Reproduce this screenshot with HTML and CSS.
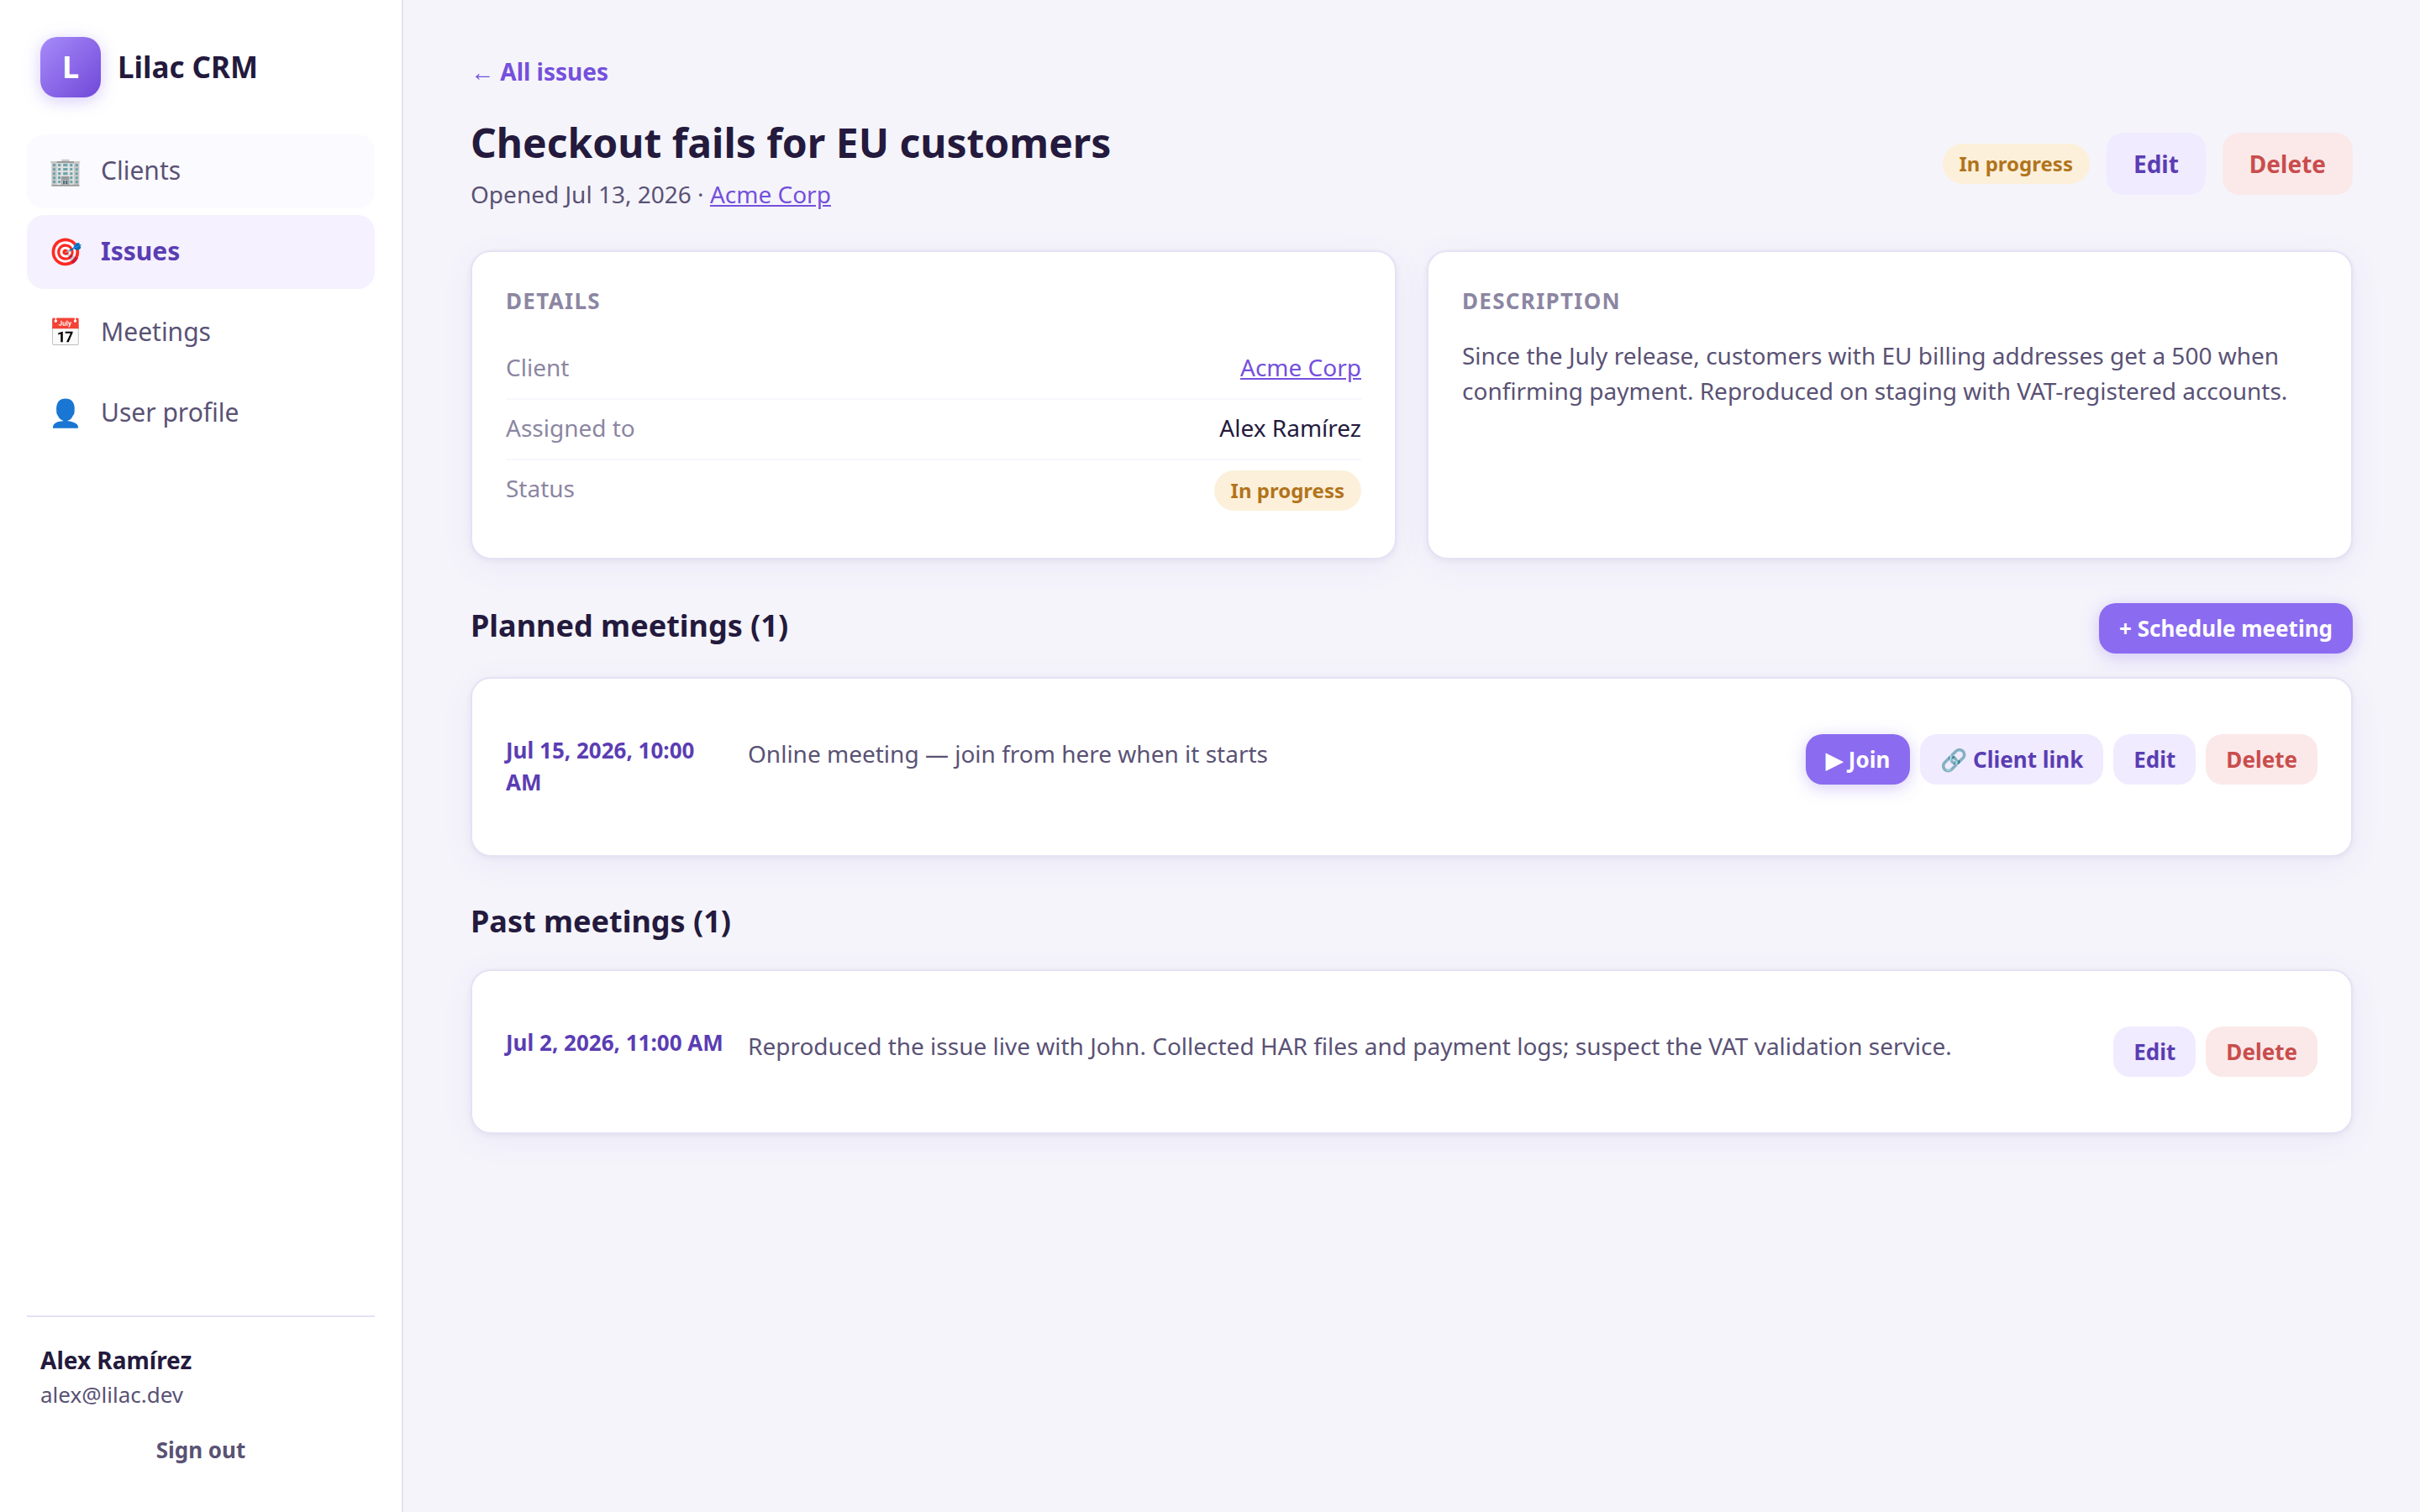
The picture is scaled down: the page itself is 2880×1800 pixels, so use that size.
FILE: index.html
```html
<!DOCTYPE html>
<html lang="en">
<head>
  <meta charset="UTF-8">
  <meta name="viewport" content="width=device-width, initial-scale=1.0">
  <title>Checkout fails for EU customers - Lilac CRM</title>
  <link rel="stylesheet" href="styles.css">
</head>
<body>
  <div class="layout">
    <!-- Sidebar -->
    <aside class="sidebar">
      <div class="brand">
        <span class="brand-logo">L</span>
        <span class="brand-name">Lilac CRM</span>
      </div>

      <nav class="nav">
        <a class="nav-link hovered" href="#"><span class="nav-icon">🏢</span>Clients</a>
        <a class="nav-link active" href="#"><span class="nav-icon">🎯</span>Issues</a>
        <a class="nav-link" href="#"><span class="nav-icon">📅</span>Meetings</a>
        <a class="nav-link" href="#"><span class="nav-icon">👤</span>User profile</a>
      </nav>

      <div class="user">
        <div class="user-name">Alex Ramírez</div>
        <div class="user-email">alex@lilac.dev</div>
        <button class="btn btn-small btn-ghost" type="button">Sign out</button>
      </div>
    </aside>

    <!-- Issue page -->
    <main class="content">
      <a class="back-link" href="#">← All issues</a>

      <header class="page-header">
        <div>
          <h1>Checkout fails for EU customers</h1>
          <p class="subtitle">Opened Jul 13, 2026 · <a href="#">Acme Corp</a></p>
        </div>
        <div class="page-actions">
          <span class="badge">In progress</span>
          <button class="btn btn-soft" type="button">Edit</button>
          <button class="btn btn-danger" type="button">Delete</button>
        </div>
      </header>

      <div class="card-grid">
        <section class="card">
          <h2 class="card-title">Details</h2>
          <dl class="details">
            <div class="details-row">
              <dt>Client</dt>
              <dd><a href="#">Acme Corp</a></dd>
            </div>
            <div class="details-row">
              <dt>Assigned to</dt>
              <dd>Alex Ramírez</dd>
            </div>
            <div class="details-row">
              <dt>Status</dt>
              <dd><span class="badge">In progress</span></dd>
            </div>
          </dl>
        </section>

        <section class="card">
          <h2 class="card-title">Description</h2>
          <p class="description">Since the July release, customers with EU billing addresses get a 500 when confirming payment. Reproduced on staging with VAT-registered accounts.</p>
        </section>
      </div>

      <div class="section-header">
        <h2>Planned meetings (1)</h2>
        <button class="btn btn-small btn-primary" type="button">+ Schedule meeting</button>
      </div>
      <section class="card">
        <div class="meeting">
          <div class="meeting-date">Jul 15, 2026, 10:00 AM</div>
          <p class="meeting-text">Online meeting — join from here when it starts</p>
          <div class="meeting-actions">
            <button class="btn btn-small btn-primary" type="button">▶ Join</button>
            <button class="btn btn-small btn-soft" type="button">🔗 Client link</button>
            <button class="btn btn-small btn-soft" type="button">Edit</button>
            <button class="btn btn-small btn-danger" type="button">Delete</button>
          </div>
        </div>
      </section>

      <div class="section-header">
        <h2>Past meetings (1)</h2>
      </div>
      <section class="card">
        <div class="meeting">
          <div class="meeting-date">Jul 2, 2026, 11:00 AM</div>
          <p class="meeting-text">Reproduced the issue live with John. Collected HAR files and payment logs; suspect the VAT validation service.</p>
          <div class="meeting-actions">
            <button class="btn btn-small btn-soft" type="button">Edit</button>
            <button class="btn btn-small btn-danger" type="button">Delete</button>
          </div>
        </div>
      </section>
    </main>
  </div>
</body>
</html>
```
FILE: styles.css
```css
* {
  box-sizing: border-box;
}

body {
  margin: 0;
  font-family: "Noto Sans", sans-serif;
  font-size: 28px;
  line-height: 42px;
  color: #231a3d;
  background-color: #f5f4fb;
}

h1, h2, p, dl, dd {
  margin: 0;
}

a {
  color: #7450dc;
}

.layout {
  display: flex;
  min-height: 100vh;
}

/* Sidebar */
.sidebar {
  display: flex;
  flex-direction: column;
  flex: 0 0 480px;
  padding: 44px 32px;
  background-color: #ffffff;
  border-right: 2px solid #e5e2f5;
}

.brand {
  display: flex;
  align-items: center;
  gap: 20px;
  padding: 0 16px;
  margin-bottom: 44px;
}

.brand-logo {
  display: flex;
  align-items: center;
  justify-content: center;
  width: 72px;
  height: 72px;
  border-radius: 20px;
  background: linear-gradient(135deg, #a78bfa, #7048d8);
  box-shadow: 0 4px 20px rgba(139, 108, 240, 0.35);
  color: #ffffff;
  font-size: 36px;
  font-weight: 700;
}

.brand-name {
  font-size: 35px;
  font-weight: 700;
}

.nav {
  display: flex;
  flex-direction: column;
  gap: 8px;
}

.nav-link {
  display: flex;
  align-items: center;
  gap: 24px;
  height: 88px;
  padding: 0 28px 2px;
  border-radius: 20px;
  font-size: 30px;
  color: #5a5275;
  text-decoration: none;
}

.nav-link.hovered {
  background-color: #fbfaff;
}

.nav-link.active {
  background-color: #f5f1ff;
  color: #5b3db3;
  font-weight: 700;
}

.nav-icon {
  display: flex;
  justify-content: center;
  width: 36px;
  font-size: 32px;
}

.user {
  display: flex;
  flex-direction: column;
  margin-top: auto;
  padding-top: 30px;
  border-top: 2px solid #e5e2f5;
}

.user-name {
  padding: 0 16px;
  font-weight: 700;
}

.user-email {
  padding: 0 16px;
  margin-bottom: 16px;
  font-size: 26px;
  line-height: 40px;
  color: #5a5275;
}

/* Page */
.content {
  flex: 1;
  min-width: 0;
  padding: 64px 80px;
}

.back-link {
  display: block;
  margin-bottom: 32px;
  font-weight: 700;
  text-decoration: none;
}

.page-header {
  display: flex;
  align-items: center;
  justify-content: space-between;
  margin-bottom: 46px;
}

h1 {
  margin-bottom: 8px;
  font-size: 48px;
  line-height: 64px;
}

.subtitle {
  color: #5a5275;
}

.page-actions {
  display: flex;
  align-items: center;
  gap: 20px;
}

.badge {
  display: inline-block;
  padding: 6px 20px;
  border-radius: 24px;
  background-color: #fdf0db;
  color: #b2741b;
  font-size: 24px;
  font-weight: 700;
  line-height: 36px;
}

/* Buttons */
.btn {
  padding: 16px 32px;
  border: none;
  border-radius: 20px;
  font-family: inherit;
  font-size: 28px;
  font-weight: 700;
  line-height: 42px;
  cursor: pointer;
}

.btn-small {
  padding: 10px 24px;
  font-size: 26px;
  line-height: 40px;
}

.btn-primary {
  background-color: #8b6cf0;
  box-shadow: 0 4px 20px rgba(139, 108, 240, 0.35);
  color: #ffffff;
}

.btn-soft {
  background-color: #f0ebfe;
  color: #5b3db3;
}

.btn-danger {
  background-color: #fbe9e9;
  color: #c94d4d;
}

.btn-ghost {
  background-color: transparent;
  color: #5a5275;
}

/* Cards */
.card-grid {
  display: grid;
  grid-template-columns: 1fr 1fr;
  gap: 36px;
}

.card {
  padding: 40px;
  border: 2px solid #e5e2f5;
  border-radius: 24px;
  background-color: #ffffff;
  box-shadow: 0 2px 6px rgba(35, 26, 61, 0.06), 0 8px 40px rgba(91, 61, 179, 0.06);
}

.card-title {
  margin-bottom: 26px;
  font-size: 26px;
  line-height: 36px;
  font-weight: 700;
  letter-spacing: 0.05em;
  text-transform: uppercase;
  color: #8c86a3;
}

.details {
  padding-top: 2px;
}

.details-row {
  display: flex;
  align-items: flex-start;
  justify-content: space-between;
  padding: 12px 0 16px;
  border-bottom: 2px solid #f8f7fe;
}

.details-row:last-child {
  border-bottom: none;
}

.details-row dt {
  color: #8c86a3;
}

.description {
  color: #5a5275;
}

/* Meetings */
.section-header {
  display: flex;
  align-items: baseline;
  justify-content: space-between;
  min-height: 54px;
  margin: 52px 0 28px;
}

.section-header h2 {
  font-size: 36px;
  line-height: 50px;
}

.meeting {
  display: flex;
  align-items: flex-start;
  gap: 28px;
  padding: 26px 0;
}

.meeting-date {
  flex: 0 0 260px;
  padding-bottom: 2px;
  font-size: 26px;
  font-weight: 700;
  line-height: 38px;
  color: #5b3db3;
}

.meeting-text {
  flex: 1;
  padding-top: 2px;
  color: #5a5275;
}

.meeting-actions {
  display: flex;
  gap: 12px;
}
```
